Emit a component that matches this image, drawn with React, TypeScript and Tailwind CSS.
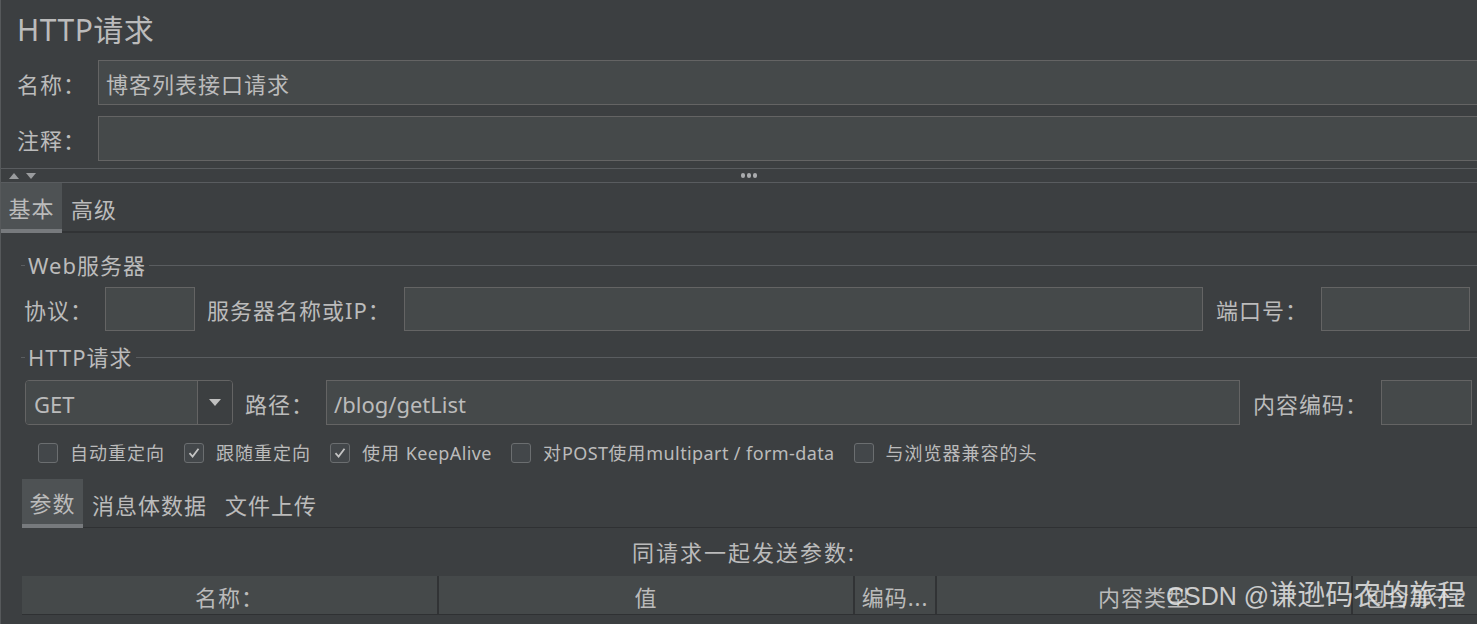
import React from "react";

// JMeter "HTTP请求" sampler panel, Darcula look

function Field({ value, className }: { value?: string; className?: string }) {
  return (
    <div
      className={`h-full border border-[#646464] bg-[#45494a] flex items-center px-[7px] whitespace-nowrap overflow-hidden ${className ?? ""}`}
    >
      {value}
    </div>
  );
}

function Label({ text, className }: { text: string; className?: string }) {
  return <div className={`shrink-0 whitespace-nowrap ${className ?? ""}`}>{text}</div>;
}

function GroupTitle({ text }: { text: string }) {
  return (
    <div className="h-[30px] flex items-center ml-[20px]">
      <div className="w-[4px] h-px bg-[#5a5d60]" />
      <div className="px-[3px] whitespace-nowrap">{text}</div>
      <div className="flex-1 h-px bg-[#5a5d60]" />
    </div>
  );
}

function Check({ children, checked }: { children: React.ReactNode; checked?: boolean }) {
  return (
    <div className="flex items-center">
      <div className="w-[20px] h-[20px] rounded-[3px] border border-[#6b6e70] bg-[#43474a] flex items-center justify-center">
        {checked && (
          <svg width="14" height="14" viewBox="0 0 14 14">
            <path d="M2.5 7.2 L5.6 10.5 L11.5 2.8" fill="none" stroke="#c4c4c4" strokeWidth="1.8" />
          </svg>
        )}
      </div>
      <div className="ml-[12px] text-[18px] tracking-[1px] whitespace-nowrap">{children}</div>
    </div>
  );
}

const Lat = ({ t }: { t: string }) => <span className="tracking-[0.4px] text-[18px]">{t}</span>;

const COLUMNS = [
  { t: "名称：", w: "w-[415px]" },
  { t: "值", w: "w-[416px]" },
  { t: "编码...", w: "w-[82px]" },
  { t: "内容类型", w: "w-[416px]" },
  { t: "包含等于?", w: "flex-1" },
];

export default function App() {
  return (
    <div className="relative w-[1477px] h-[624px] overflow-hidden bg-[#3c3f41] text-[#bbbbbb] border-l border-[#56595b] font-['Noto_Sans','Noto_Sans_CJK_SC',sans-serif] text-[22px] tracking-[1px] leading-none">
      {/* title */}
      <div className="h-[60px] flex items-center pl-[16px] text-[30px] tracking-[0.5px]">HTTP请求</div>

      <div className="h-[45px] flex items-center pl-[16px]">
        <Label text="名称：" className="w-[81px] pt-[2px]" />
        <Field value="博客列表接口请求" className="flex-1 border-r-0 pt-[2px]" />
      </div>
      <div className="h-[45px] mt-[11px] flex items-center pl-[16px]">
        <Label text="注释：" className="w-[81px] pt-[2px]" />
        <Field className="flex-1 border-r-0" />
      </div>

      {/* splitter */}
      <div className="relative mt-[7px] h-[15px] border-y border-[#595c5f] flex items-center">
        <svg className="ml-[7px]" width="30" height="8" viewBox="0 0 30 8">
          <path d="M1 7 L6 1 L11 7 Z" fill="#9a9c9e" />
          <path d="M18 1 L28 1 L23 7 Z" fill="#9a9c9e" />
        </svg>
        <div className="absolute left-[740px] top-[4px] flex gap-[2px]">
          <div className="w-[4px] h-[5px] rounded-full bg-[#a9abad]" />
          <div className="w-[4px] h-[5px] rounded-full bg-[#a9abad]" />
          <div className="w-[4px] h-[5px] rounded-full bg-[#a9abad]" />
        </div>
      </div>

      {/* top tabs */}
      <div className="h-[50px] flex items-stretch border-b-2 border-[#313335]">
        <div className="w-[61px] bg-[#4e5254] border-b-[4px] border-[#777a7d] mb-[-2px] pt-[4px] flex items-center justify-center">
          基本
        </div>
        <div className="px-[9px] pt-[4px] flex items-center">高级</div>
      </div>

      {/* Web服务器 */}
      <div className="mt-[17px]">
        <GroupTitle text="Web服务器" />
      </div>
      <div className="h-[44px] mt-[7px] flex items-center pl-[23px] pr-[7px]">
        <Label text="协议：" className="w-[81px] pt-[2px]" />
        <Field className="w-[90px]" />
        <Label text="服务器名称或IP：" className="ml-[12px] w-[197px] pt-[2px]" />
        <Field className="flex-1" />
        <Label text="端口号：" className="ml-[13px] w-[105px] pt-[2px]" />
        <Field className="w-[149px]" />
      </div>

      {/* HTTP请求 */}
      <div className="mt-[11px]">
        <GroupTitle text="HTTP请求" />
      </div>
      <div className="h-[45px] mt-[8px] flex items-center pl-[24px] pr-[5px]">
        <div className="w-[208px] h-full flex rounded-[4px] border border-[#646464] overflow-hidden">
          <div className="flex-1 bg-[#45494a] flex items-center pl-[8px] pt-[2px] border-r border-[#646464] tracking-normal">GET</div>
          <div className="w-[34px] flex items-center justify-center bg-[#3c3f41]">
            <svg width="12" height="7" viewBox="0 0 12 7">
              <path d="M0 0 L12 0 L6 7 Z" fill="#c0c0c0" />
            </svg>
          </div>
        </div>
        <Label text="路径：" className="ml-[12px] w-[81px] pt-[2px]" />
        <Field value="/blog/getList" className="flex-1 tracking-normal pt-[2px]" />
        <Label text="内容编码：" className="ml-[13px] w-[128px] pt-[2px]" />
        <Field className="w-[91px]" />
      </div>

      {/* options */}
      <div className="h-[30px] mt-[13px] flex items-center gap-[19px] pl-[37px]">
        <Check>自动重定向</Check>
        <Check checked>跟随重定向</Check>
        <Check checked>
          使用 <Lat t="KeepAlive" />
        </Check>
        <Check>
          对<Lat t="POST" />使用<Lat t="multipart / form-data" />
        </Check>
        <Check>与浏览器兼容的头</Check>
      </div>

      {/* parameter tabs */}
      <div className="ml-[21px] mt-[11px] h-[49px] flex items-stretch border-b border-[#2f3133]">
        <div className="w-[61px] bg-[#4e5254] border-b-[4px] border-[#777a7d] mb-[-1px] pt-[3px] flex items-center justify-center">
          参数
        </div>
        <div className="pl-[9px] pt-[3px] flex items-center">消息体数据</div>
        <div className="pl-[18px] pt-[3px] flex items-center">文件上传</div>
      </div>

      <div className="ml-[10px] h-[48px] flex items-center justify-center tracking-[2px]">同请求一起发送参数:</div>

      <div className="ml-[21px] h-[39px] flex border-b border-[#2f3133] bg-[#45494a]">
        {COLUMNS.map((c, i) => (
          <div
            key={c.t}
            className={`${c.w} pt-[3px] flex items-center justify-center whitespace-nowrap overflow-hidden ${i > 0 ? "border-l-2 border-[#313335]" : ""}`}
          >
            {c.t}
          </div>
        ))}
      </div>

      {/* watermark */}
      <div className="absolute left-[1165px] top-[582px] text-[28px] tracking-normal text-[#e6e6e6]/85 font-['Liberation_Sans','Noto_Sans_CJK_SC',sans-serif] whitespace-nowrap flex items-baseline">
        <span className="text-[25px]">CSDN @</span>
        <span>谦逊码农的旅程</span>
      </div>
    </div>
  );
}
